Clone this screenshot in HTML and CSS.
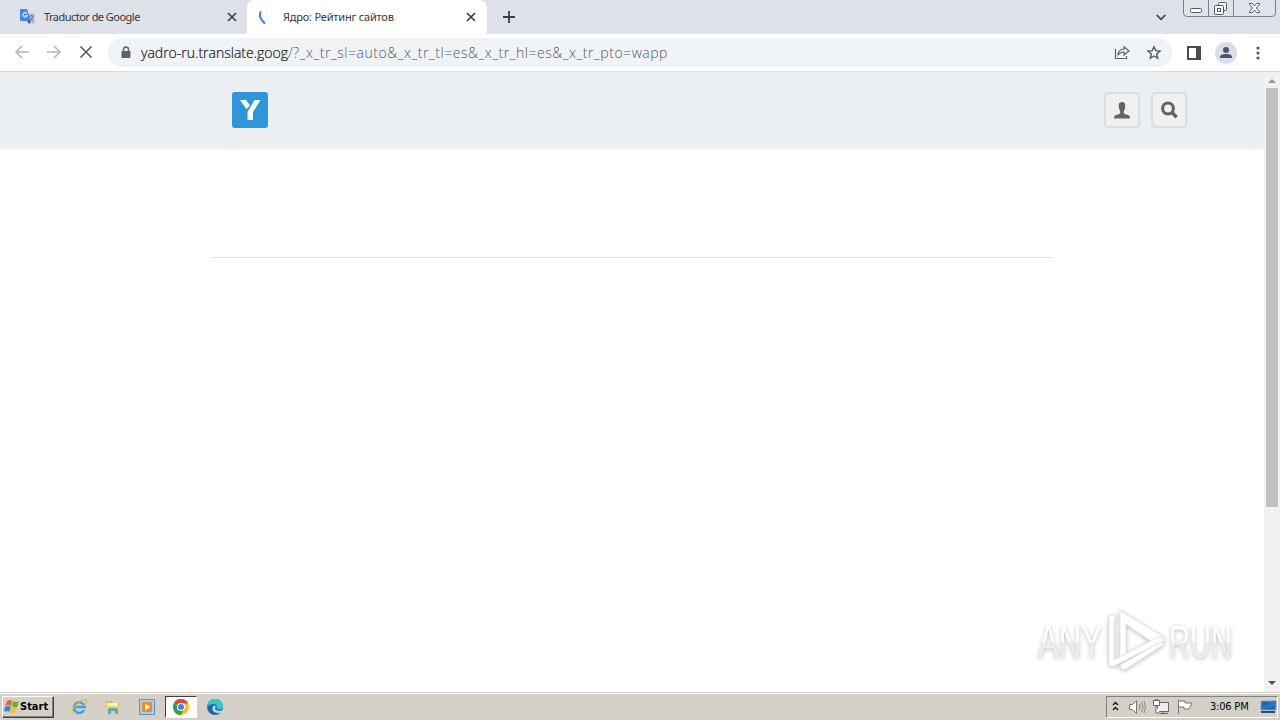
FILE: index.html
```html
<!DOCTYPE html>
<html lang="es">
<head>
<meta charset="utf-8">
<title>Ядро: Рейтинг сайтов</title>
<link rel="stylesheet" href="styles.css">
</head>
<body>
<div class="screen">
  <header class="tabs">
    <div class="tab">
      <svg class="fav" width="16" height="16" viewBox="0 0 16 16"><path d="M6 4h8q1 0 1 1v10H9z" fill="#c3cad4"/><path d="M1 0h6l4 12H1q-1 0-1-1V1q0-1 1-1z" fill="#4384f0"/><path d="M7 12h4l-2 3z" fill="#2457c5"/><path d="M7 4.500A2.200 2.200 0 1 0 7.300 6.500H5" fill="none" stroke="#e8f0ff" stroke-width="1.100"/><path d="M9 7h5M11.500 6v1M13 7q-1 4-3 5M10.500 8.500l3 4" fill="none" stroke="#65768c"/></svg>
      <span class="tab-title first">Traductor de Google</span>
      <svg class="close" width="10" height="10" viewBox="0 0 10 10"><path d="M1 1l8 8M9 1L1 9" stroke="#3c4043" stroke-width="1.700"/></svg>
    </div>
    <div class="tab active">
      <svg class="fav" width="16" height="16" viewBox="0 0 16 16"><path d="M4 2.500Q.5 7.500 8 14.500" fill="none" stroke="#3978e6" stroke-width="2"/></svg>
      <span class="tab-title second">Ядро: Рейтинг сайтов</span>
      <svg class="close" width="10" height="10" viewBox="0 0 10 10"><path d="M1 1l8 8M9 1L1 9" stroke="#3c4043" stroke-width="1.700"/></svg>
    </div>
    <svg class="plus" width="12" height="12" viewBox="0 0 12 12"><path d="M6 0v12M0 6h12" stroke="#3c4043" stroke-width="1.800"/></svg>
    <svg class="chevron" width="10" height="7" viewBox="0 0 10 7"><path d="M.7 1L5 5.300 9.300 1" fill="none" stroke="#3c4043" stroke-width="1.700"/></svg>
    <svg class="window-buttons" width="94" height="17" viewBox="0 0 94 17"><path d="M.5 0v13q0 3.500 3.500 3.500h85q3.500 0 3.500-3.500V0M25.500 0v16M50.500 0v16" fill="#dfe3ea" stroke="#7b808b"/><g fill="#f4f6f9" stroke="#555a66"><rect x="7.500" y="8.500" width="11" height="4" rx="1"/><rect x="35.500" y="2.500" width="8" height="8" rx="1"/><rect x="31.500" y="5.500" width="9" height="9" rx="1"/><rect x="34.500" y="8.500" width="3" height="3"/><path d="M66.500 3.500h3l2 2.500 2-2.500h3v1L73.300 8l3.200 3.500v1h-3l-2-2.500-2 2.500h-3v-1L69.700 8l-3.200-3.500z"/></g></svg>
  </header>
  <nav class="toolbar">
    <svg class="nav-icons" width="108" height="36" viewBox="0 0 108 36"><g fill="none" stroke-width="1.600"><path d="M29 17H16m6-6l-6 6 6 6M47 17h13m-6-6l6 6-6 6" stroke="#b6b8bb"/><path d="M80.500 11.500l11 11m0-11l-11 11" stroke="#55595e"/></g></svg>
    <div class="address">
      <svg class="lock" width="10" height="13" viewBox="0 0 10 13"><path d="M2.500 6V3.500q0-2.500 2.500-2.500t2.500 2.500V6" fill="none" stroke="#5f6368" stroke-width="1.500"/><rect x=".5" y="5" width="9" height="7" rx="1" fill="#5f6368"/></svg>
      <div class="url"><span class="host">yadro-ru.translate.goog</span><span class="query">/?_x_tr_sl=auto&amp;_x_tr_tl=es&amp;_x_tr_hl=es&amp;_x_tr_pto=wapp</span></div>
      <svg class="share" width="16" height="14" viewBox="0 0 16 14"><path d="M1.500 3v9.500h11V10M4 9q0-5.500 6-6V.8l5 4.200-5 4V6Q6 6 4 9z" fill="none" stroke="#5f6368" stroke-width="1.200"/></svg>
      <svg class="star" width="16" height="16" viewBox="0 0 16 16"><path d="M8 1.700l1.700 4 4.300.4-3.300 2.900 1 4.300L8 11l-3.700 2.300 1-4.300L2 6.100l4.300-.4z" fill="none" stroke="#55595e" stroke-width="1.400"/></svg>
    </div>
    <svg class="panel-icon" width="14" height="14" viewBox="0 0 14 14"><rect x="1" y="1" width="12" height="12" fill="none" stroke="#484b50" stroke-width="2"/><path d="M9 1h4v12H9z" fill="#484b50"/></svg>
    <svg class="avatar" width="22" height="22" viewBox="0 0 22 22"><circle cx="11" cy="11" r="11" fill="#d9dee6"/><circle cx="11" cy="8" r="3" fill="#485375"/><path d="M5 16v-1q0-3 6-3t6 3v1z" fill="#485375"/></svg>
    <svg class="dots" width="4" height="14" viewBox="0 0 4 14"><g fill="#55595e"><circle cx="2" cy="2" r="1.600"/><circle cx="2" cy="7" r="1.600"/><circle cx="2" cy="12" r="1.600"/></g></svg>
  </nav>
  <div class="viewport">
    <main class="page">
      <div class="site-header">
        <svg class="logo" width="36" height="36" viewBox="0 0 36 36"><rect width="36" height="36" rx="3" fill="#2e96dd"/><path d="M8 8h6l4 5.500-3.500 3.500zM22.500 8h6L21 20v8h-5.500v-8z" fill="#fff"/></svg>
        <div class="square-button"><svg width="16" height="17" viewBox="0 0 16 17"><path d="M8 0C4.500 0 4.500 3 5 6q.3 2 1.200 3v2.500L1 13.500Q0 14 0 16.500h16q0-2.500-1-3l-5.200-2V9q.9-1 1.200-3c.5-3 .5-6-3-6z" fill="#636363"/></svg></div>
        <div class="square-button"><svg width="18" height="18" viewBox="0 0 18 18"><circle cx="8" cy="7.500" r="5.400" fill="none" stroke="#606060" stroke-width="3"/><path d="M12 11.500l4.700 4.700" stroke="#606060" stroke-width="3.400"/></svg></div>
      </div>
      <hr class="rule">
    </main>
    <aside class="scrollbar">
      <svg width="8" height="4" viewBox="0 0 8 4"><path d="M0 4l4-4 4 4z" fill="#929292"/></svg>
      <div class="thumb"></div>
      <svg class="down" width="8" height="4" viewBox="0 0 8 4"><path d="M0 0l4 4 4-4z" fill="#505050"/></svg>
    </aside>
    <div class="watermark">
      <svg width="220" height="76" viewBox="0 0 220 76">
        <defs><linearGradient id="shade" x2="0" y2="1"><stop offset=".5" stop-color="#fff"/><stop offset=".52" stop-color="#ededed"/></linearGradient></defs>
        <g class="mark-text"><text x="8" y="53" textLength="64" lengthAdjust="spacingAndGlyphs">ANY</text><text x="139" y="53" textLength="63" lengthAdjust="spacingAndGlyphs">RUN</text></g>
        <g class="mark-shape"><path d="M91 6l41 25q4 3 1 6L119 35 96 19v29l-6 5V7q0-2 1-1z"/><path d="M79 12q1-3 6-2v6l-1 1v38l44-23q5 0 5 4L84 61q-5 1-5-4z"/><path d="M90 60l41-23q3 0 2 3L96 64q-5 3-6-4z"/></g>
      </svg>
    </div>
  </div>
  <footer class="taskbar">
    <div class="start"><svg width="16" height="15" viewBox="0 0 16 15"><path d="M3 2q3-2 5 0L7 7Q4 5 1 7z" fill="#e46b27"/><path d="M9 2q3 2 6 0l-2 6q-3 1-5-1z" fill="#68ad32"/><path d="M1 8q3-2 6 0l-2 5q-2-2-5 0z" fill="#3382d2"/><path d="M8 8q3 2 5 0l-2 6q-3 1-5-1z" fill="#f4bd25"/></svg><span>Start</span></div>
    <svg class="launcher first-launcher" width="16" height="16" viewBox="0 0 16 16"><path d="M13 11a5.300 5.300 0 1 1 .5-3H4" fill="none" stroke="#38a0dc" stroke-width="2.500"/><path d="M2 14C-3 13 11-2 15 1q2 2-3 6" fill="none" stroke="#ddb540" stroke-width="1.300"/></svg>
    <svg class="launcher" width="16" height="16" viewBox="0 0 16 16"><path d="M1 2h6l1 2h6v10H1z" fill="#dfbb49"/><path d="M2 4h11v3H2z" fill="#fff3ad"/><path d="M0 7h15v7H0z" fill="#edd176"/><path d="M3 15v-4q0-2 2-2h6q2 0 2 2v4h-3v-3H6v3z" fill="#58a9d1"/></svg>
    <svg class="launcher" width="16" height="16" viewBox="0 0 16 16"><rect x=".5" y=".5" width="15" height="15" fill="#a8cceb" stroke="#5e93c4"/><rect x="3" y="3" width="10" height="10" rx="1" fill="#f58a17"/><path d="M6 4.500v7L11 8z" fill="#fff"/></svg>
    <div class="running"><svg width="16" height="16" viewBox="0 0 16 16"><circle cx="8" cy="8" r="8" fill="#f4c51f"/><path d="M8 8L1 4Q3 0 8 0t7 4.500H8z" fill="#df4435"/><path d="M1 4q-2 4 0 8 2 4 7 4l3.500-6.500L8 8z" fill="#2da04b"/><circle cx="8" cy="8" r="4" fill="#fff"/><circle cx="8" cy="8" r="3" fill="#4180e9"/></svg></div>
    <svg class="edge" width="16" height="16" viewBox="0 0 16 16"><circle cx="8" cy="8" r="8" fill="#1677bd"/><path d="M0 8C0-3 16-2 16 7q0 4-5 3-2-1-1-2 0-3-4-3-4 0-6 3z" fill="#38c6c2"/><path d="M6 7q-3 7 7 7 2-1 2-3-3 2-6 0Q7 10 9 7z" fill="#d4d0c8"/><path d="M6 7q-3 6 5 8-7 2-10-4Q1 5 6 7z" fill="#126bac"/></svg>
    <div class="tray">
      <svg width="88" height="20" viewBox="0 0 88 20"><path d="M6 8l2.500-2.500L11 8M6 13l2.500-2.500L11 13" fill="none" stroke="#111" stroke-width="1.400"/><path d="M22.500 7.500h3l4-4v13l-4-4h-3z" fill="#fff" stroke="#777"/><path d="M32 7q2 3 0 6M34.500 5q3 5 0 10M37 4q3 6 0 12" fill="none" stroke="#888"/><path d="M50.500 5.500h11v9h-11zM53 16.500h8M56 14v2" fill="#eee" stroke="#666"/><path d="M46.500 3.500h6v5h-6zM48.500 2v2M50.500 2v2M49 9v7h4" fill="#fff" stroke="#666"/><path d="M71.500 3v14M72 4h6v2h7l-3 6h-5v-2h-5" fill="#fff" stroke="#777"/></svg>
      <time>3:06 PM</time>
      <svg class="display" width="17" height="14" viewBox="0 0 17 14"><path d="M1 1h15v9H1z" fill="#1766b3" stroke="#83a8c9"/><path d="M1 6q8 0 11-5h4v3Q10 10 1 9z" fill="#2878c9"/><path d="M1 11h14v2H1z" fill="#294d73"/></svg>
    </div>
  </footer>
</div>
</body>
</html>
```
FILE: styles.css
```css
* { box-sizing: border-box; }
body { margin: 0; font-family: "DejaVu Sans Condensed", "DejaVu Sans", sans-serif; }
svg { display: block; flex-shrink: 0; }
.screen { width: 1280px; height: 720px; display: flex; flex-direction: column; overflow: hidden; background: #fff; }
.tabs { height: 34px; background: #dee1e8; display: flex; align-items: flex-start; }
.tab { width: 247px; height: 34px; padding: 9px 10px 0 20px; display: flex; border-radius: 0 0 8px 0; flex-shrink: 0; }
.tab.active { width: 240px; background: #fff; border-radius: 8px 8px 0 0; padding-left: 10px; padding-right: 11px; }
.fav { margin-right: 8px; }
.tab.active .fav { margin-right: 10px; }
.tab-title { font: 11px/16px "Noto Sans", sans-serif; color: #35383d; white-space: nowrap; letter-spacing: -.53px; }
.tab-title.second { letter-spacing: -.2px; }
.close { margin: 3px 0 0 auto; }
.plus { margin: 11px 0 0 16px; }
.chevron { margin: 14px 0 0 auto; }
.window-buttons { margin: 0 3px 0 17px; }
.toolbar { height: 38px; display: flex; align-items: center; border-bottom: 1px solid #d9dadd; }
.address { width: 1064px; height: 29px; border-radius: 15px; background: #eff3f6; display: flex; align-items: center; padding: 0 10px 0 13px; }
.url { margin-left: 10px; font: 300 14px/20px "Open Sans", "Noto Sans", sans-serif; color: #555a62; white-space: nowrap; }
.host { color: #15181c; letter-spacing: 0; -webkit-text-stroke: .2px #15181c; }
.query { letter-spacing: .53px; }
.share { margin-left: auto; }
.star { margin-left: 16px; }
.panel-icon { margin-left: 15px; }
.avatar { margin-left: 14px; }
.dots { margin-left: 19px; }
.viewport { height: 620px; display: flex; position: relative; }
.page { width: 1264px; }
.site-header { height: 77px; background: #eceff2; padding: 0 77px 1px 232px; display: flex; align-items: center; }
.logo { margin-right: auto; }
.square-button { width: 36px; height: 36px; border: 2px solid #dcdfe1; border-radius: 4px; background: #f0f0f0; display: flex; align-items: center; justify-content: center; }
.square-button + .square-button { margin-left: 11px; }
.rule { width: 840px; height: 1px; border: 0; background: #e2e5e5; margin: 108px 0 0 212px; }
.scrollbar { width: 16px; background: #f1f1f1; display: flex; flex-direction: column; align-items: center; padding: 7px 0 7px; }
.thumb { width: 12px; height: 419px; background: #c1c1c1; margin-top: 5px; }
.down { margin-top: auto; }
.watermark { position: absolute; left: 1030px; top: 533px; filter: drop-shadow(0 1px 2px #bbb); }
.mark-text { font: 47px "Liberation Sans Narrow", "Liberation Sans", sans-serif; fill: url(#shade); }
.mark-shape { fill: #fff; fill-rule: evenodd; stroke: #e7e7e7; stroke-width: 1; }
.taskbar { height: 28px; background: #d4d0c8; border-top: 1px solid #d4d0c8; box-shadow: inset 0 1px #fff; display: flex; align-items: center; padding: 1px 2px 1px; }
.start { width: 52px; height: 22px; padding-left: 1px; display: flex; align-items: center; background: #d4d0c8; border: 1px solid; border-color: #fff #404040 #404040 #fff; box-shadow: inset -1px -1px #808080; font: bold 11px "DejaVu Sans Condensed", "DejaVu Sans", sans-serif; }
.launcher { margin-left: 18px; }
.first-launcher { margin-left: 17px; }
.running { width: 32px; height: 22px; margin: 0 10px; border: 1px solid; border-color: #404040 #fff #fff #404040; background: #fff; display: flex; align-items: center; justify-content: center; }
.tray { width: 172px; height: 22px; margin-left: auto; border: 1px solid; border-color: #808080 #fff #fff #808080; display: flex; align-items: center; font-size: 11px; white-space: nowrap; }
.tray time { margin-left: 15px; letter-spacing: -.2px; }
.display { margin-left: auto; }
```
